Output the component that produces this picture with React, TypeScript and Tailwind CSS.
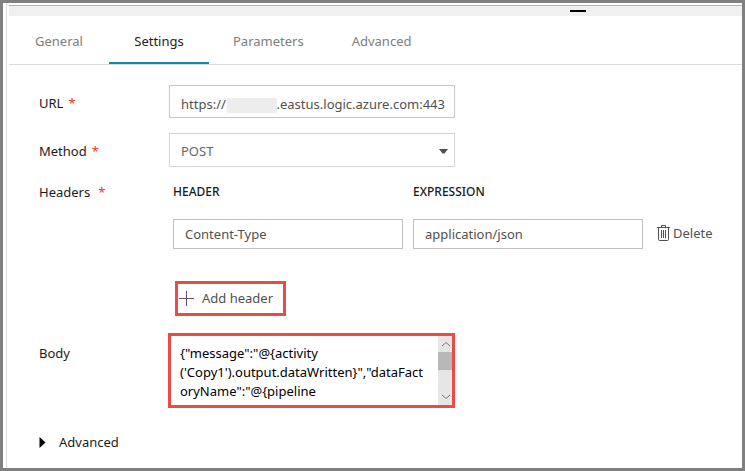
import React from "react";

const TABS = ["General", "Settings", "Parameters", "Advanced"];
const HIDDEN_HOST = "\u00a0".repeat(15);
const BODY_TEXT =
  '{"message":"@{activity\n(\'Copy1\').output.dataWritten}","dataFact\noryName":"@{pipeline';

function Required() {
  return <span className="text-[#e03a24]">*</span>;
}

function TabBar() {
  return (
    <div role="tablist" className="flex h-[49px] border-b border-[#dcdcdc]">
      {TABS.map((tab) => (
        <button
          key={tab}
          type="button"
          role="tab"
          aria-selected={tab === "Settings"}
          className={
            tab === "Settings"
              ? "min-w-[100px] border-b-2 border-[#1b83a3] px-6 pt-1 text-[#222222]"
              : "min-w-[100px] border-b-2 border-transparent px-6 pt-1 text-[#7d7d7d]"
          }
        >
          {tab}
        </button>
      ))}
    </div>
  );
}

function TrashIcon() {
  return (
    <svg width="13" height="16" viewBox="0 0 13 16" fill="none" stroke="#505058" aria-hidden="true">
      <path d="M0 2.5H13M4.5 2V.5H8.5V2M1.5 3V14.5Q1.5 15.5 2.5 15.5H10.5Q11.5 15.5 11.5 14.5V3" />
      <path d="M4.5 5V13M6.5 5V13M8.5 5V13" />
    </svg>
  );
}

function ScrollBar() {
  return (
    <div aria-hidden="true" className="flex w-[14px] shrink-0 flex-col bg-[#e6e6e6]">
      <svg className="h-4 w-full" viewBox="0 0 14 16" fill="none" stroke="#777777">
        <path d="M4 10L8 6.5L12 10" />
      </svg>
      <div className="h-[18px] bg-[#b8b8b8]" />
      <svg className="mt-auto h-4 w-full" viewBox="0 0 14 16" fill="none" stroke="#777777">
        <path d="M4 6L8 9.5L12 6" />
      </svg>
    </div>
  );
}

export default function App() {
  return (
    <div className="flex min-h-screen border-3 border-[#808080] bg-white pl-[3px] font-['Noto_Sans','Open_Sans',sans-serif] text-[13px] leading-[19px] text-[#1a1a1a]">
      <div className="flex-1 border-l border-[#dcdcdc] pt-[2px] pl-[2px]">
        <div className="flex h-[11px] justify-end border-t border-[#b3b3b3] bg-[#f0f0f0] pt-1 pr-[156px]">
          <div className="h-[2px] w-4 bg-black" />
        </div>
        <TabBar />
        <form className="grid grid-cols-[130px_1fr] pt-5 pl-[30px]">
          <label htmlFor="url" className="flex gap-[5px] pt-[9px]">
            URL <Required />
          </label>
          <div className="relative w-[286px]">
            <input
              id="url"
              defaultValue={`https://${HIDDEN_HOST}.eastus.logic.azure.com:443`}
              className="block h-[33px] w-full border border-[#c6c6c6] pr-1 pl-[11px] pt-1 text-[#505050] outline-none"
            />
            <div className="absolute top-[13px] left-[58px] h-[15px] w-[50px] bg-[#ededed]" />
          </div>

          <label htmlFor="method" className="mt-[15px] flex gap-[5px] pt-[9px]">
            Method <Required />
          </label>
          <div className="relative mt-[15px] w-[286px]">
            <select
              id="method"
              defaultValue="POST"
              className="block h-[34px] w-full appearance-none border border-[#d4d4d4] bg-white pt-[2px] pl-[11px] text-[#666666] outline-none"
            >
              <option>POST</option>
            </select>
            <svg
              className="pointer-events-none absolute top-4 right-[7px]"
              width="9"
              height="5"
              viewBox="0 0 9 5"
              fill="#505058"
              aria-hidden="true"
            >
              <path d="M0 0H9L5.5 4.5H3.5Z" />
            </svg>
          </div>

          <div className="mt-4 flex gap-2">
            Headers <Required />
          </div>
          <div className="mt-4 flex flex-col items-start pl-1">
            <div className="flex gap-[10px]">
              <label htmlFor="header" className="w-[230px] text-xs leading-[18px] font-medium">
                HEADER
              </label>
              <label htmlFor="expression" className="w-[230px] text-xs leading-[18px] font-medium">
                EXPRESSION
              </label>
            </div>
            <div className="mt-[18px] flex items-center gap-[10px]">
              <input
                id="header"
                defaultValue="Content-Type"
                className="h-[30px] w-[230px] border border-[#c2c2c2] px-[11px] text-[#505050] outline-none"
              />
              <input
                id="expression"
                defaultValue="application/json"
                className="h-[30px] w-[230px] border border-[#c2c2c2] px-[11px] text-[#505050] outline-none"
              />
              <button type="button" className="ml-1 flex items-center gap-[3px] pb-[2px] text-[#505050]">
                <TrashIcon />
                Delete
              </button>
            </div>
            <button
              type="button"
              className="mt-8 ml-[2px] flex h-[35px] w-[111px] items-center gap-2 border-3 border-[#e94b47] pl-px text-[#505050]"
            >
              <svg width="15" height="15" viewBox="0 0 15 15" stroke="#68506c" aria-hidden="true">
                <path d="M0 7.5H15M7.5 0V15" />
              </svg>
              Add header
            </button>
          </div>

          <label htmlFor="body" className="mt-7">
            Body
          </label>
          <div className="mt-[17px] -ml-px flex h-[75px] w-[287px] border-3 border-[#e94b47]">
            <textarea
              id="body"
              defaultValue={BODY_TEXT}
              className="block min-w-0 flex-1 resize-none overflow-hidden pt-2 pl-[9px] text-black outline-none"
            />
            <ScrollBar />
          </div>
          <button type="button" className="mt-[25px] flex items-center gap-[13px] text-left">
            <svg width="7" height="11" viewBox="0 0 7 11" fill="#000000" aria-hidden="true">
              <path d="M0.5 0L6.5 5.5L0.5 11Z" />
            </svg>
            Advanced
          </button>
        </form>
      </div>
    </div>
  );
}
